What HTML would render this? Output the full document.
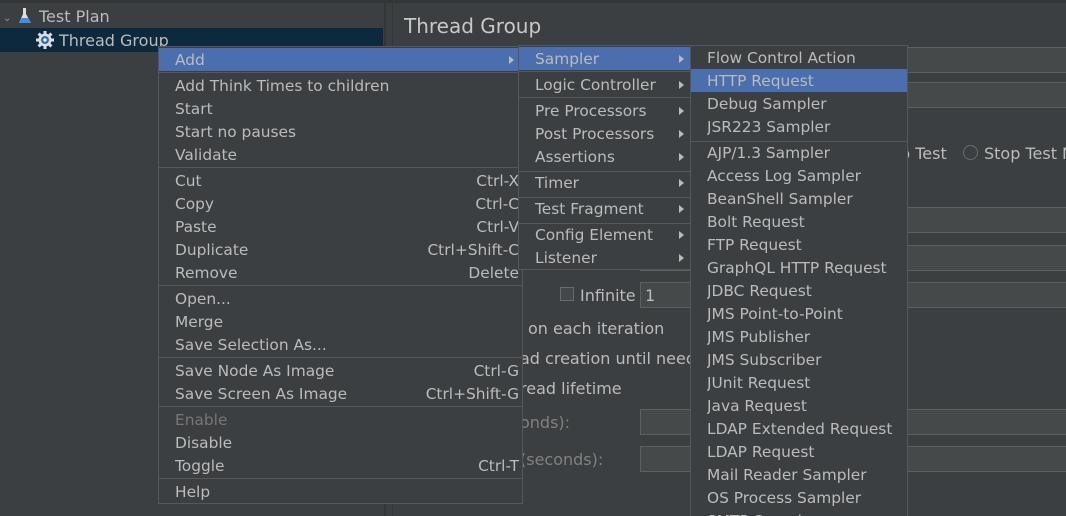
<!DOCTYPE html>
<html style="width:1066px;height:516px;overflow:hidden"><head><meta charset="utf-8"><style>
*{margin:0;padding:0;box-sizing:border-box}
body{width:1066px;height:516px;background:#3c3f41;overflow:hidden;position:relative;font-family:"DejaVu Sans","Liberation Sans",sans-serif;font-size:15.4px;color:#bbbbbb}
.a{position:absolute;white-space:nowrap}
.t{position:absolute;white-space:nowrap;line-height:25px;height:23px}
.fld{position:absolute;background:#45494a;border:1px solid #5e6060}
.menu{position:absolute;background:#3c3f41;border:1px solid #555759}
.sep{position:absolute;height:1px;background:#555759;left:0;right:0}
.hl{position:absolute;background:#4b6eaf;left:0;right:0;height:23px}
.arr{position:absolute;width:0;height:0;border-top:4px solid transparent;border-bottom:4px solid transparent;border-left:5px solid #bbbbbb}
</style></head><body>
<div class="a" style="left:0;top:0;width:1066px;height:3px;background:#333537"></div>
<div class="a" style="left:0;top:28px;width:383px;height:24px;background:#0d293e"></div>
<div class="a" style="left:3px;top:13px;color:#999;font-size:10px">&#8964;</div>
<svg class="a" style="left:18px;top:7px" width="14" height="18" viewBox="0 0 14 18"><path d="M5 1h3v6l5 9H1l4-9z" fill="#ddd"/><path d="M3.5 11h7l2.5 5H1z" fill="#3d8ee6"/></svg>
<div class="a" style="left:39px;top:7px;font-size:16px">Test Plan</div>
<svg class="a" style="left:36px;top:31px" width="18" height="18" viewBox="0 0 18 18"><circle cx="9" cy="9" r="6.5" fill="#ddd"/><g stroke="#ddd" stroke-width="3"><path d="M9 0v18M0 9h18M2.6 2.6l12.8 12.8M15.4 2.6L2.6 15.4"/></g><circle cx="9" cy="9" r="4" fill="#2d6fc0"/><circle cx="9" cy="9" r="1.6" fill="#fff"/></svg>
<div class="a" style="left:59px;top:31px;font-size:16px">Thread Group</div>
<div class="a" style="left:384px;top:3px;width:2px;height:513px;background:#333537"></div>
<div class="a" style="left:392px;top:3px;width:1px;height:513px;background:#333537"></div>
<div class="a" style="left:404px;top:14px;font-size:20px;color:#c8c8c8">Thread Group</div>
<div class="fld" style="left:640px;top:47px;width:430px;height:26px"></div>
<div class="fld" style="left:640px;top:82px;width:430px;height:26px"></div>
<div class="a" style="left:900px;top:144px;font-size:16px">p Test</div>
<div class="a" style="left:963px;top:145px;width:15px;height:15px;border:1px solid #6b6b6b;border-radius:50%"></div>
<div class="a" style="left:984px;top:144px;font-size:16px">Stop Test N</div>
<div class="fld" style="left:640px;top:207px;width:430px;height:26px"></div>
<div class="fld" style="left:640px;top:245px;width:430px;height:26px"></div>
<div class="a" style="left:560px;top:287px;width:14px;height:14px;border:1px solid #6b6b6b;background:#43494a"></div>
<div class="a" style="left:580px;top:286px;font-size:16px">Infinite</div>
<div class="fld" style="left:640px;top:282px;width:430px;height:26px"></div>
<div class="a" style="left:645px;top:286px;font-size:16px">1</div>
<div class="a" style="left:528px;top:319px;font-size:16px">on each iteration</div>
<div class="a" style="left:520px;top:349px;font-size:16px">ad creation until need</div>
<div class="a" style="left:520px;top:379px;font-size:16px">read lifetime</div>
<div class="a" style="left:520px;top:413px;font-size:16px;color:#808080">onds):</div>
<div class="fld" style="left:640px;top:409px;width:430px;height:26px"></div>
<div class="a" style="left:520px;top:450px;font-size:16px;color:#808080">(seconds):</div>
<div class="fld" style="left:640px;top:446px;width:430px;height:26px"></div>

<div class="menu" style="left:158px;top:46px;width:365px;height:458px">
 <div class="hl" style="top:1px"></div>
 <div class="arr" style="left:350px;top:9px"></div>
 <div class="sep" style="top:25px"></div>
 <div class="sep" style="top:120px"></div>
 <div class="sep" style="top:238px"></div>
 <div class="sep" style="top:310px"></div>
 <div class="sep" style="top:359px"></div>
 <div class="sep" style="top:431px"></div>
</div>
<div style="position:absolute;left:175px;top:0;width:344px">
 <div class="t" style="top:48px">Add</div>
 <div class="t" style="top:74px">Add Think Times to children</div>
 <div class="t" style="top:97px">Start</div>
 <div class="t" style="top:120px">Start no pauses</div>
 <div class="t" style="top:143px">Validate</div>
 <div class="t" style="top:169px">Cut</div><div class="t" style="top:169px;right:0">Ctrl-X</div>
 <div class="t" style="top:192px">Copy</div><div class="t" style="top:192px;right:0">Ctrl-C</div>
 <div class="t" style="top:215px">Paste</div><div class="t" style="top:215px;right:0">Ctrl-V</div>
 <div class="t" style="top:238px">Duplicate</div><div class="t" style="top:238px;right:0">Ctrl+Shift-C</div>
 <div class="t" style="top:261px">Remove</div><div class="t" style="top:261px;right:0">Delete</div>
 <div class="t" style="top:287px">Open...</div>
 <div class="t" style="top:310px">Merge</div>
 <div class="t" style="top:333px">Save Selection As...</div>
 <div class="t" style="top:359px">Save Node As Image</div><div class="t" style="top:359px;right:0">Ctrl-G</div>
 <div class="t" style="top:382px">Save Screen As Image</div><div class="t" style="top:382px;right:0">Ctrl+Shift-G</div>
 <div class="t" style="top:408px;color:#777">Enable</div>
 <div class="t" style="top:431px">Disable</div>
 <div class="t" style="top:454px">Toggle</div><div class="t" style="top:454px;right:0">Ctrl-T</div>
 <div class="t" style="top:480px">Help</div>
</div>

<div class="menu" style="left:518px;top:45px;width:174px;height:225px">
 <div class="hl" style="top:1px"></div>
 <div class="sep" style="top:25px"></div>
 <div class="sep" style="top:51px"></div>
 <div class="sep" style="top:125px"></div>
 <div class="sep" style="top:151px"></div>
 <div class="sep" style="top:177px"></div>
 <div class="arr" style="left:160px;top:9px"></div>
 <div class="arr" style="left:160px;top:35px"></div>
 <div class="arr" style="left:160px;top:61px"></div>
 <div class="arr" style="left:160px;top:84px"></div>
 <div class="arr" style="left:160px;top:107px"></div>
 <div class="arr" style="left:160px;top:133px"></div>
 <div class="arr" style="left:160px;top:159px"></div>
 <div class="arr" style="left:160px;top:185px"></div>
 <div class="arr" style="left:160px;top:208px"></div>
</div>
<div style="position:absolute;left:535px;top:0">
 <div class="t" style="top:47px">Sampler</div>
 <div class="t" style="top:73px">Logic Controller</div>
 <div class="t" style="top:99px">Pre Processors</div>
 <div class="t" style="top:122px">Post Processors</div>
 <div class="t" style="top:145px">Assertions</div>
 <div class="t" style="top:171px">Timer</div>
 <div class="t" style="top:197px">Test Fragment</div>
 <div class="t" style="top:223px">Config Element</div>
 <div class="t" style="top:246px">Listener</div>
</div>

<div class="menu" style="left:690px;top:45px;width:218px;height:471px;border-bottom:none">
 <div class="hl" style="top:23px"></div>
 <div class="sep" style="top:95px"></div>
</div>
<div style="position:absolute;left:707px;top:0;width:359px;height:516px;overflow:hidden">
 <div class="t" style="top:46px">Flow Control Action</div>
 <div class="t" style="top:69px">HTTP Request</div>
 <div class="t" style="top:92px">Debug Sampler</div>
 <div class="t" style="top:115px">JSR223 Sampler</div>
 <div class="t" style="top:141px">AJP/1.3 Sampler</div>
 <div class="t" style="top:164px">Access Log Sampler</div>
 <div class="t" style="top:187px">BeanShell Sampler</div>
 <div class="t" style="top:210px">Bolt Request</div>
 <div class="t" style="top:233px">FTP Request</div>
 <div class="t" style="top:256px">GraphQL HTTP Request</div>
 <div class="t" style="top:279px">JDBC Request</div>
 <div class="t" style="top:302px">JMS Point-to-Point</div>
 <div class="t" style="top:325px">JMS Publisher</div>
 <div class="t" style="top:348px">JMS Subscriber</div>
 <div class="t" style="top:371px">JUnit Request</div>
 <div class="t" style="top:394px">Java Request</div>
 <div class="t" style="top:417px">LDAP Extended Request</div>
 <div class="t" style="top:440px">LDAP Request</div>
 <div class="t" style="top:463px">Mail Reader Sampler</div>
 <div class="t" style="top:486px">OS Process Sampler</div>
 <div class="t" style="top:509px">SMTP Sampler</div>
</div>
</body></html>
